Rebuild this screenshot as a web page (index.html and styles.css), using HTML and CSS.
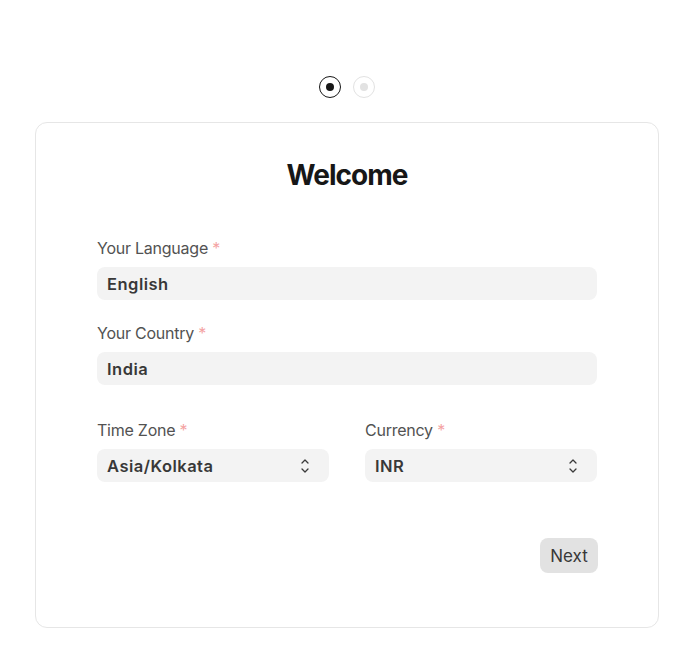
FILE: index.html
```html
<!DOCTYPE html>
<html>
<head>
<meta charset="utf-8">
<link rel="stylesheet" href="styles.css">
</head>
<body>
<div class="page">
  <div class="steps">
    <span class="step active"><span class="dot"></span></span>
    <span class="step"><span class="dot"></span></span>
  </div>
  <div class="card">
    <h1 class="title">Welcome</h1>
    <div class="field">
      <label class="label">Your Language <span class="req">*</span></label>
      <div class="input">English</div>
    </div>
    <div class="field">
      <label class="label">Your Country <span class="req">*</span></label>
      <div class="input">India</div>
    </div>
    <div class="row">
      <div class="field">
        <label class="label">Time Zone <span class="req">*</span></label>
        <div class="input select">Asia/Kolkata
          <svg class="chev" width="12" height="18" viewBox="0 0 12 18"><path d="M3 6 L6 3 L9 6 M3 12 L6 15 L9 12" fill="none" stroke="#3a3a3a" stroke-width="1.3" stroke-linecap="round" stroke-linejoin="round"/></svg>
        </div>
      </div>
      <div class="field">
        <label class="label">Currency <span class="req">*</span></label>
        <div class="input select">INR
          <svg class="chev" width="12" height="18" viewBox="0 0 12 18"><path d="M3 6 L6 3 L9 6 M3 12 L6 15 L9 12" fill="none" stroke="#3a3a3a" stroke-width="1.3" stroke-linecap="round" stroke-linejoin="round"/></svg>
        </div>
      </div>
    </div>
    <div class="actions">
      <button class="btn">Next</button>
    </div>
  </div>
</div>
</body>
</html>
```

FILE: styles.css
```css
* { box-sizing: border-box; }
html, body { margin: 0; padding: 0; background: #fff; }
body { font-family: Inter, "Noto Sans", sans-serif; color: #171717; }
.page { width: 692px; padding: 76px 33px 0 35px; }
.steps { display: flex; justify-content: center; gap: 12px; }
.step { width: 22px; height: 22px; border-radius: 50%; border: 1px solid #e2e2e2; display: flex; align-items: center; justify-content: center; }
.step .dot { width: 8px; height: 8px; border-radius: 50%; background: #e2e2e2; }
.step.active { border-color: #171717; }
.step.active .dot { background: #171717; }
.card { margin-top: 24px; width: 624px; height: 506px; border: 1px solid #e6e6e6; border-radius: 12px; padding: 34px 61px 0 61px; }
.title { margin: 0 0 45px; text-align: center; font-size: 28px; font-weight: 700; letter-spacing: -0.035em; line-height: 36px; color: #171717; }
.field { display: flex; flex-direction: column; }
.field + .field { margin-top: 23px; }
.label { font-size: 16px; line-height: 20px; color: #525252; margin-bottom: 9px; letter-spacing: -0.015em; }
.req { color: #f4a3a3; }
.input { height: 33px; border-radius: 8px; background: #f3f3f3; padding: 0 10px; display: flex; align-items: center; font-size: 16.5px; font-weight: 600; color: #383838; letter-spacing: 0.03em; }
.select { justify-content: space-between; padding-right: 18px; }
.chev { flex: none; }
.row { display: grid; grid-template-columns: 1fr 1fr; gap: 36px; margin-top: 35px; }
.row .field + .field { margin-top: 0; }
.actions { display: flex; justify-content: flex-end; margin-top: 56px; margin-right: -1px; }
.btn { font-family: Inter, "Noto Sans", sans-serif; height: 35px; width: 58px; border: none; border-radius: 8px; background: #e2e2e2; color: #383838; font-size: 17px; padding: 0; }
```
